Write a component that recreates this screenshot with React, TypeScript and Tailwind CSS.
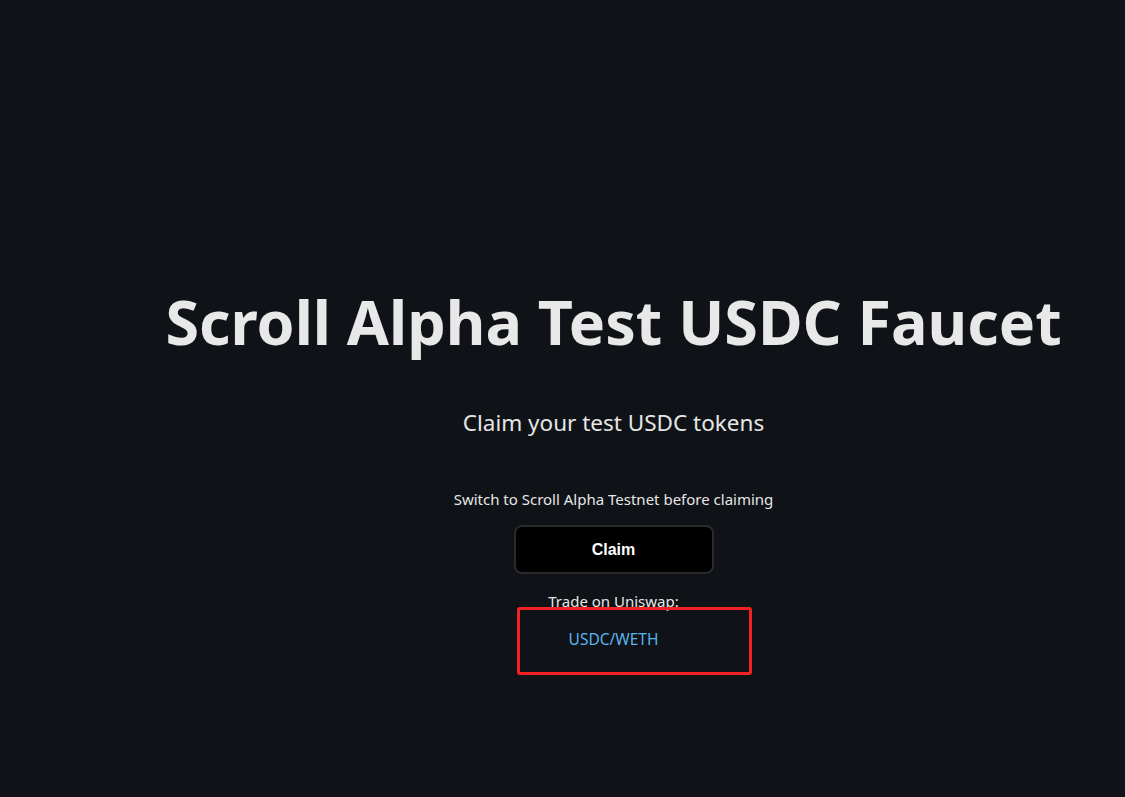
import React from "react";

export default function App() {
  return (
    <div className="relative min-h-[797px] w-full bg-[#0f1217] text-[#e6e6e6]">
      <div className="flex flex-col items-center pl-[102px] pt-[284px] font-['Noto_Sans','Open_Sans',sans-serif]">
        <h1 className="text-[61px] font-bold leading-[76px] text-[#e8e8e8] whitespace-nowrap">
          Scroll Alpha Test USDC Faucet
        </h1>
        <p className="mt-[48px] text-[22.5px] leading-[30px] text-[#e6e6e6]">Claim your test USDC tokens</p>
        <p className="mt-[51px] text-[15px] leading-[20px] text-[#e6e6e6]">
          Switch to Scroll Alpha Testnet before claiming
        </p>
        <button className="mt-[16px] h-[49px] w-[200px] rounded-[8px] border-2 border-[#2b2b2b] bg-black font-['Liberation_Sans',Arial,sans-serif] text-[16px] font-bold text-white">
          Claim
        </button>
        <p className="mt-[17px] text-[15px] leading-[20px] text-[#e6e6e6]">Trade on Uniswap:</p>
        <a className="mt-[18px] text-[15.5px] leading-[20px] text-[#58b4ec]" href="#">
          USDC/WETH
        </a>
      </div>
      <div className="pointer-events-none absolute left-[517px] top-[607px] h-[68px] w-[235px] rounded-[3px] border-[3px] border-[#f22222]" />
    </div>
  );
}
